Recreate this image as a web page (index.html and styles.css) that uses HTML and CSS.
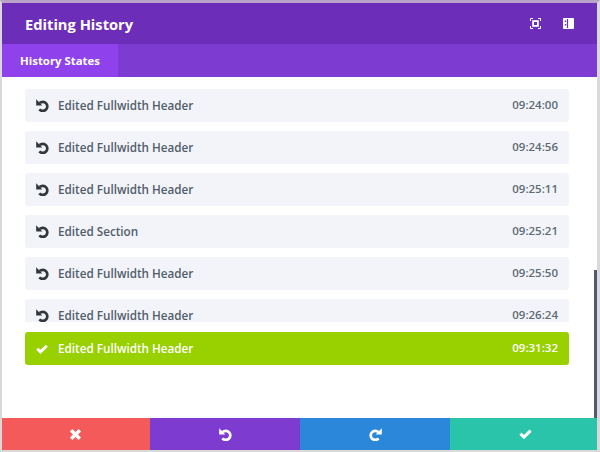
FILE: index.html
```html
<!DOCTYPE html>
<html lang="en">
<head>
<meta charset="utf-8">
<title>Editing History</title>
<link rel="stylesheet" href="styles.css">
</head>
<body>
<svg class="defs" width="0" height="0" aria-hidden="true">
  <symbol id="undo" viewBox="0 0 14 14">
    <path d="M3.900 4.400A4.900 4.900 0 1 1 3.600 11.200" fill="none" stroke="currentColor" stroke-width="2.900"/>
    <path d="M.2.400v6.600h6.600z" fill="currentColor"/>
  </symbol>
  <symbol id="check" viewBox="0 0 14 11">
    <path d="M1.400 5.200l3.900 3.700L12.600 1.800" fill="none" stroke="currentColor" stroke-width="3.400"/>
  </symbol>
</svg>
<div class="frame">
  <header class="head">
    <h1 class="title">Editing History</h1>
    <div class="head-icons">
      <svg class="head-icon" viewBox="0 0 11 11"><path d="M.5 3V.5H3M8 .5h2.500V3M10.500 8v2.500H8M3 10.500H.5V8" fill="none" stroke="#fff" stroke-width="1"/><rect x="3.100" y="3.100" width="4.800" height="4.800" fill="none" stroke="#fff" stroke-width="1.800"/></svg>
      <svg class="head-icon" viewBox="0 0 11 11"><rect width="11" height="11" rx="1" fill="#fff"/><path d="M4.500 1v9" stroke="#6c2eb9" stroke-width="1.200"/><path d="M1.800 2.500h1.400v1.500H1.800zM1.800 6h1.400v1.500H1.800z" fill="#6c2eb9"/></svg>
    </div>
  </header>
  <nav class="tabs"><span class="tab">History States</span></nav>
  <main class="body">
    <div class="list">
      <div class="row"><svg class="ico"><use href="#undo"/></svg><span class="label">Edited Fullwidth Header</span><span class="time">09:24:00</span></div>
      <div class="row"><svg class="ico"><use href="#undo"/></svg><span class="label">Edited Fullwidth Header</span><span class="time">09:24:56</span></div>
      <div class="row"><svg class="ico"><use href="#undo"/></svg><span class="label">Edited Fullwidth Header</span><span class="time">09:25:11</span></div>
      <div class="row"><svg class="ico"><use href="#undo"/></svg><span class="label">Edited Section</span><span class="time">09:25:21</span></div>
      <div class="row"><svg class="ico"><use href="#undo"/></svg><span class="label">Edited Fullwidth Header</span><span class="time">09:25:50</span></div>
      <div class="row"><svg class="ico"><use href="#undo"/></svg><span class="label">Edited Fullwidth Header</span><span class="time">09:26:24</span></div>
    </div>
    <div class="row row-active"><svg class="ico ico-check"><use href="#check"/></svg><span class="label">Edited Fullwidth Header</span><span class="time">09:31:32</span></div>
    <div class="scrollbar"></div>
  </main>
  <footer class="actions">
    <button class="act act-red"><svg class="act-ico" viewBox="0 0 12 12"><path d="M2 2l8 8M10 2l-8 8" stroke="currentColor" stroke-width="3.200" fill="none"/></svg></button>
    <button class="act act-purple"><svg class="act-ico"><use href="#undo"/></svg></button>
    <button class="act act-blue"><svg class="act-ico flip"><use href="#undo"/></svg></button>
    <button class="act act-green"><svg class="act-ico act-check"><use href="#check"/></svg></button>
  </footer>
</div>
</body>
</html>
```
FILE: styles.css
```css
* { box-sizing: border-box; }
html, body { margin: 0; padding: 0; }
body { width: 600px; height: 452px; overflow: hidden; background: #fff; font-family: "Open Sans", sans-serif; }
.defs { position: absolute; }
.frame {
  width: 600px; height: 452px; display: flex; flex-direction: column;
  border-style: solid; border-color: #d9d9d9; border-width: 3px 3px 2px 2px;
  border-top-color: #b9a3c9;
}
.head {
  height: 41px; flex: none; background: #6c2eb9;
  display: flex; align-items: center; justify-content: space-between;
  padding: 0 23px 0 23px;
}
.title { margin: 0; font-size: 14.7px; line-height: 22px; font-weight: 700; color: #fff; }
.head-icons { display: flex; gap: 22px; }
.head-icon { width: 11px; height: 11px; display: block; }
.tabs { height: 33px; flex: none; background: #7d3bd1; display: flex; }
.tab {
  width: 116px; background: #8f42ec; color: #fff; font-size: 11.4px; font-weight: 700;
  display: flex; align-items: center; justify-content: center;
}
.body { flex: 1; position: relative; background: #fff; padding: 12px 0 0 23px; min-height: 0; }
.list { height: 233px; width: 544px; overflow: hidden; display: flex; flex-direction: column; gap: 9px; }
.row {
  flex: none; width: 544px; height: 33px; background: #f3f4f9; border-radius: 3px;
  display: flex; align-items: center; padding: 0 11px;
  font-size: 11.7px; font-weight: 600; color: #525d6b;
}
.ico { width: 13px; height: 13px; flex: none; color: #32373c; }
.label { margin-left: 9px; flex: 1; padding-bottom: 2px; }
.time { color: #5f6a76; font-size: 11.5px; padding-bottom: 2px; }
.row-active { margin-top: 10px; background: #98d000; color: #fff; }
.row-active .time { color: #fff; }
.ico-check { color: #fff; width: 12px; height: 10px; margin-right: 1px; }
.scrollbar { position: absolute; right: 0; top: 193px; width: 3px; height: 148px; background: #505a72; }
.actions { height: 32px; flex: none; display: flex; }
.act { width: 150px; flex: none; border: 0; margin: 0; padding: 0; display: flex; align-items: center; justify-content: center; color: #fff; }
.act-red { width: 148px; padding-right: 2px; background: #f45a5a; }
.act-purple { background: #7d3bcf; }
.act-blue { background: #2b87da; }
.act-green { width: 147px; padding-left: 3px; background: #29c4a9; }
.act-ico { width: 13px; height: 13px; display: block; }
.act-check { width: 13px; height: 10px; }
.flip { transform: scaleX(-1); }
```
